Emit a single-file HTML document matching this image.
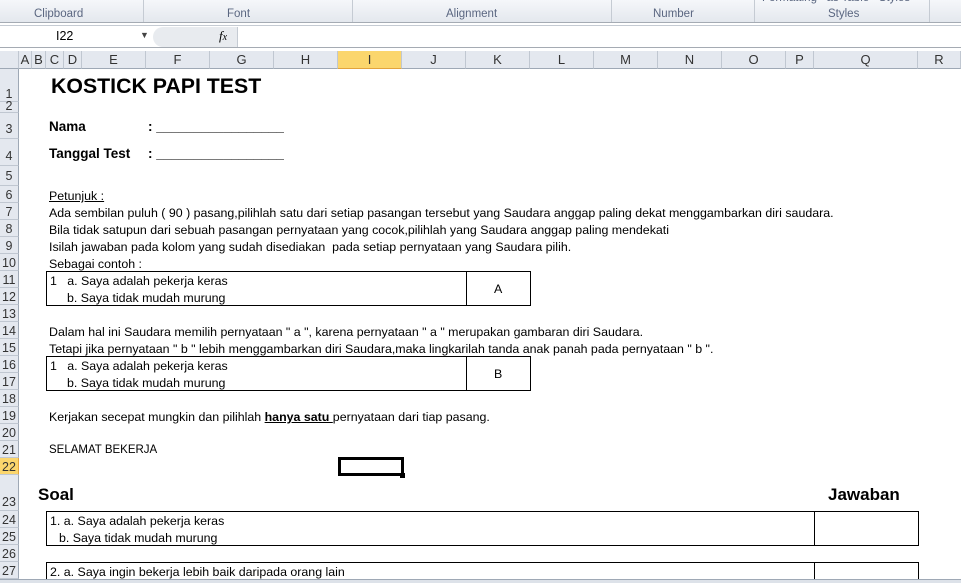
<!DOCTYPE html>
<html><head><meta charset="utf-8"><style>
*{margin:0;padding:0;box-sizing:border-box}
html,body{width:961px;height:583px;overflow:hidden}
body{background:#fff;position:relative;font-family:"Liberation Sans",sans-serif}
.a{position:absolute;white-space:nowrap}
.rib{left:0;top:0;width:961px;height:23px;background:linear-gradient(#f5f7fa,#e4e8ee);border-bottom:1px solid #a5abb3}
.g{top:8px;font-size:11.5px;color:#5a6680}
.sep{top:0;width:1px;height:22px;background:#c5cbd3}
.colh{top:51px;height:18px;background:#e4e8ef;border-bottom:1px solid #9ea8b5;border-right:1px solid #c0c7d1;font-size:13px;color:#333;text-align:center;line-height:18px}
.rowh{left:0;width:19px;background:#e4e8ef;border-right:1px solid #9ea8b5;border-bottom:1px solid #c0c7d1;font-size:12.5px;color:#333;text-align:center}
.t{font-size:12.4px;color:#000}
.b{font-weight:bold}
.box{border:1px solid #000}
</style></head><body>
<div class="a rib"></div>
<div class="a g" style="left:34px">Clipboard</div>
<div class="a g" style="left:227px">Font</div>
<div class="a g" style="left:446px">Alignment</div>
<div class="a g" style="left:653px">Number</div>
<div class="a g" style="left:828px">Styles</div>
<div class="a g" style="left:762px;top:-8px">Formatting &nbsp; as Table &nbsp; Styles</div>
<div class="a sep" style="left:143px"></div>
<div class="a sep" style="left:352px"></div>
<div class="a sep" style="left:611px"></div>
<div class="a sep" style="left:754px"></div>
<div class="a sep" style="left:929px"></div>
<div class="a" style="left:0;top:25px;width:961px;height:23px;background:#fff;border-bottom:1px solid #a5abb3;border-top:1px solid #c5cbd3"></div>
<div class="a" style="left:56px;top:29px;font-size:12.5px">I22</div>
<div class="a" style="left:140px;top:30px;font-size:9px;color:#444">▼</div>
<div class="a" style="left:153px;top:27px;width:85px;height:20px;background:#e8ebef;border-radius:10px 0 0 10px;border-right:1px solid #c5cbd3"></div>
<div class="a" style="left:219px;top:28px;font-size:13px;font-style:italic;font-family:'Liberation Serif',serif">f<span style="font-size:10px">x</span></div>
<div class="a" style="left:0;top:49px;width:961px;height:2px;background:#fff"></div>
<div class="a colh" style="left:0;width:19px"></div>
<div class="a colh" style="left:19px;width:13px">A</div>
<div class="a colh" style="left:32px;width:14px">B</div>
<div class="a colh" style="left:46px;width:18px">C</div>
<div class="a colh" style="left:64px;width:18px">D</div>
<div class="a colh" style="left:82px;width:64px">E</div>
<div class="a colh" style="left:146px;width:64px">F</div>
<div class="a colh" style="left:210px;width:64px">G</div>
<div class="a colh" style="left:274px;width:64px">H</div>
<div class="a colh" style="left:338px;width:64px;background:#fbd66d;border-bottom:1px solid #e2a33c">I</div>
<div class="a colh" style="left:402px;width:64px">J</div>
<div class="a colh" style="left:466px;width:64px">K</div>
<div class="a colh" style="left:530px;width:64px">L</div>
<div class="a colh" style="left:594px;width:64px">M</div>
<div class="a colh" style="left:658px;width:64px">N</div>
<div class="a colh" style="left:722px;width:64px">O</div>
<div class="a colh" style="left:786px;width:28px">P</div>
<div class="a colh" style="left:814px;width:104px">Q</div>
<div class="a colh" style="left:918px;width:43px">R</div>
<div class="a rowh" style="top:69px;height:33px;line-height:50px">1</div>
<div class="a rowh" style="top:102px;height:11px;line-height:9px">2</div>
<div class="a rowh" style="top:113px;height:26px;line-height:32px">3</div>
<div class="a rowh" style="top:139px;height:27px;line-height:34px">4</div>
<div class="a rowh" style="top:166px;height:20px;line-height:20px">5</div>
<div class="a rowh" style="top:186px;height:17px;line-height:18px">6</div>
<div class="a rowh" style="top:203px;height:17px;line-height:18px">7</div>
<div class="a rowh" style="top:220px;height:17px;line-height:18px">8</div>
<div class="a rowh" style="top:237px;height:17px;line-height:18px">9</div>
<div class="a rowh" style="top:254px;height:17px;line-height:18px">10</div>
<div class="a rowh" style="top:271px;height:17px;line-height:18px">11</div>
<div class="a rowh" style="top:288px;height:17px;line-height:18px">12</div>
<div class="a rowh" style="top:305px;height:17px;line-height:18px">13</div>
<div class="a rowh" style="top:322px;height:17px;line-height:18px">14</div>
<div class="a rowh" style="top:339px;height:17px;line-height:18px">15</div>
<div class="a rowh" style="top:356px;height:17px;line-height:18px">16</div>
<div class="a rowh" style="top:373px;height:17px;line-height:18px">17</div>
<div class="a rowh" style="top:390px;height:17px;line-height:18px">18</div>
<div class="a rowh" style="top:407px;height:17px;line-height:18px">19</div>
<div class="a rowh" style="top:424px;height:17px;line-height:18px">20</div>
<div class="a rowh" style="top:441px;height:17px;line-height:18px">21</div>
<div class="a rowh" style="top:458px;height:17px;line-height:18px;background:#fbd66d;border-right:1px solid #e2a33c">22</div>
<div class="a rowh" style="top:475px;height:36px;line-height:54px">23</div>
<div class="a rowh" style="top:511px;height:17px;line-height:18px">24</div>
<div class="a rowh" style="top:528px;height:17px;line-height:18px">25</div>
<div class="a rowh" style="top:545px;height:17px;line-height:18px">26</div>
<div class="a rowh" style="top:562px;height:17px;line-height:18px">27</div>
<div class="a b" style="left:51px;top:74px;font-size:21.3px">KOSTICK PAPI TEST</div>
<div class="a b t" style="left:49px;top:119px;font-size:13.5px">Nama</div>
<div class="a b t" style="left:148px;top:119px;font-size:13.5px">: _________________</div>
<div class="a b t" style="left:49px;top:146px;font-size:13.5px">Tanggal Test</div>
<div class="a b t" style="left:148px;top:146px;font-size:13.5px">: _________________</div>
<div class="a t" style="left:49px;top:189px;text-decoration:underline">Petunjuk :</div>
<div class="a t" style="left:49px;top:206px">Ada sembilan puluh ( 90 ) pasang,pilihlah satu dari setiap pasangan tersebut yang Saudara anggap paling dekat menggambarkan diri saudara.</div>
<div class="a t" style="left:49px;top:223px">Bila tidak satupun dari sebuah pasangan pernyataan yang cocok,pilihlah yang Saudara anggap paling mendekati</div>
<div class="a t" style="left:49px;top:240px">Isilah jawaban pada kolom yang sudah disediakan &nbsp;pada setiap pernyataan yang Saudara pilih.</div>
<div class="a t" style="left:49px;top:257px">Sebagai contoh :</div>
<div class="a box" style="left:46px;top:271px;width:485px;height:35px"></div>
<div class="a" style="left:466px;top:271px;width:1px;height:35px;background:#000"></div>
<div class="a t" style="left:50px;top:274px">1 &nbsp;&nbsp;a. Saya adalah pekerja keras</div>
<div class="a t" style="left:67px;top:291px">b. Saya tidak mudah murung</div>
<div class="a t" style="left:494px;top:282px">A</div>
<div class="a t" style="left:49px;top:325px">Dalam hal ini Saudara memilih pernyataan " a ", karena pernyataan " a " merupakan gambaran diri Saudara.</div>
<div class="a t" style="left:49px;top:342px">Tetapi jika pernyataan " b " lebih menggambarkan diri Saudara,maka lingkarilah tanda anak panah pada pernyataan " b ".</div>
<div class="a box" style="left:46px;top:356px;width:485px;height:35px"></div>
<div class="a" style="left:466px;top:356px;width:1px;height:35px;background:#000"></div>
<div class="a t" style="left:50px;top:359px">1 &nbsp;&nbsp;a. Saya adalah pekerja keras</div>
<div class="a t" style="left:67px;top:376px">b. Saya tidak mudah murung</div>
<div class="a t" style="left:494px;top:367px">B</div>
<div class="a t" style="left:49px;top:410px">Kerjakan secepat mungkin dan pilihlah <b><u>hanya satu </u></b>pernyataan dari tiap pasang.</div>
<div class="a t" style="left:49px;top:444px;font-size:11.5px">SELAMAT BEKERJA</div>
<div class="a" style="left:338px;top:457px;width:66px;height:19px;border:3px solid #000"></div>
<div class="a" style="left:400px;top:473px;width:5px;height:5px;background:#000"></div>
<div class="a b" style="left:38px;top:485px;font-size:17px">Soal</div>
<div class="a b" style="left:828px;top:485px;font-size:17px">Jawaban</div>
<div class="a box" style="left:46px;top:511px;width:873px;height:35px"></div>
<div class="a" style="left:814px;top:511px;width:1px;height:35px;background:#000"></div>
<div class="a t" style="left:50px;top:514px">1. a. Saya adalah pekerja keras</div>
<div class="a t" style="left:59px;top:531px">b. Saya tidak mudah murung</div>
<div class="a" style="left:46px;top:562px;width:873px;height:17px;border:1px solid #000;border-bottom:none"></div>
<div class="a" style="left:814px;top:562px;width:1px;height:17px;background:#000"></div>
<div class="a t" style="left:50px;top:565px">2. a. Saya ingin bekerja lebih baik daripada orang lain</div>
<div class="a" style="left:0;top:579px;width:961px;height:4px;background:#dde2e9;border-top:1px solid #9ea8b5"></div>
</body></html>
